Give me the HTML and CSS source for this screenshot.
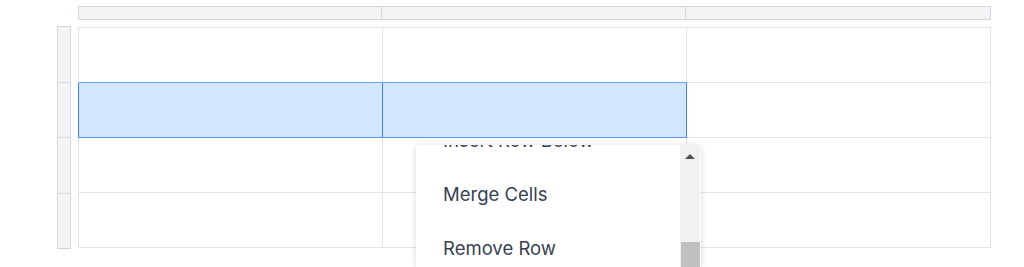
FILE: index.html
```html
<!doctype html>
<html>
<head>
	<title>Table editor</title>
	<link rel="stylesheet" href="styles.css">
</head>
<body>

	<div class="sheet">
		<div class="corner"></div>
		<div class="col-head">
			<div class="col-cell"></div>
			<div class="col-cell"></div>
			<div class="col-cell"></div>
		</div>
		<div class="row-head">
			<div class="row-cell"></div>
			<div class="row-cell"></div>
			<div class="row-cell"></div>
			<div class="row-cell"></div>
		</div>
		<div class="grid">
			<div class="cell"></div>
			<div class="cell"></div>
			<div class="cell"></div>

			<div class="cell selected first"></div>
			<div class="cell selected"></div>
			<div class="cell"></div>

			<div class="cell"></div>
			<div class="cell"></div>
			<div class="cell"></div>

			<div class="cell"></div>
			<div class="cell"></div>
			<div class="cell"></div>
		</div>
	</div>

	<!-- context menu, scrolled down by one item -->
	<div class="menu">
		<div class="menu-list">
			<div class="menu-items">
				<div class="menu-item">Insert Row Below</div>
				<div class="menu-item">Merge Cells</div>
				<div class="menu-item">Remove Row</div>
			</div>
		</div>
		<div class="scrollbar">
			<div class="scroll-up"></div>
			<div class="scroll-thumb"></div>
		</div>
	</div>

</body>
</html>
```

FILE: styles.css
```css
html {font-family: Inter, "Noto Sans", sans-serif;}
body {margin: 0; overflow: hidden; background: #fff;}

.sheet {display: grid; grid-template-columns: 14px 913px; grid-template-rows: 14px auto; column-gap: 7px; row-gap: 6px; padding: 6px 0 0 57px;}

/* headers */
.col-head {display: grid; grid-template-columns: 303px 304px 1fr; border: 1px solid #d4d6db; background: #f3f4f6; box-sizing: border-box; height: 14px;}
.col-cell {border-right: 1px solid #d4d6db;}
.col-cell:last-child {border-right: 0;}
.row-head {border: 1px solid #d4d6db; border-bottom: 0; background: #f3f4f6; width: 14px; box-sizing: border-box;}
.row-cell {height: 54.5px; border-bottom: 1px solid #d4d6db;}

/* body cells */
.grid {display: grid; grid-template-columns: 304px 304px 304px; grid-auto-rows: 55px; border-top: 1px solid #e3e4e8; border-left: 1px solid #e3e4e8; margin-top: 1px; align-self: start;}
.cell {border-right: 1px solid #e3e4e8; border-bottom: 1px solid #e3e4e8; background: #fff;}
.cell.selected {background: #d2e7fd; border-right-color: #3b82f6; border-bottom-color: #5b9bf6; box-shadow: 0 -1px 0 #69a4f7;}
.cell.selected.first {box-shadow: 0 -1px 0 #69a4f7, -1px 0 0 #3b82f6;}

/* menu */
.menu {position: absolute; left: 416px; top: 145px; width: 285px; height: 122px; display: flex; background: #fff; border-radius: 4px 4px 0 0; box-shadow: 0 1px 6px rgba(0, 0, 0, 0.16); overflow: hidden;}
.menu-list {flex: 1; overflow: hidden;}
.menu-items {margin-top: -32px;}
.menu-item {padding: 14px 27px; font-size: 18.5px; line-height: 26px; color: #374151; white-space: nowrap;}
.scrollbar {width: 20px; margin-right: 1px; background: #f1f1f1; position: relative;}
.scroll-up {width: 0; height: 0; margin: 9px auto 0; border-left: 5px solid transparent; border-right: 5px solid transparent; border-bottom: 5px solid #505050;}
.scroll-thumb {position: absolute; left: 1px; right: 0; top: 97px; bottom: 0; background: #c1c1c1;}
```
